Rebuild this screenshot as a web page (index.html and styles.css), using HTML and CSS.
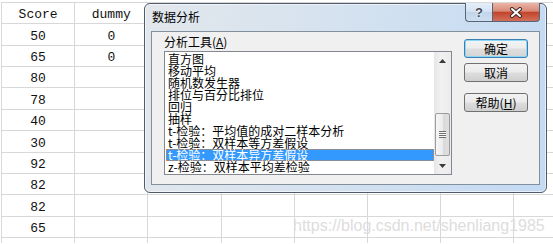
FILE: index.html
```html
<!DOCTYPE html>
<html lang="zh-CN">
<head>
  <meta charset="UTF-8">
  <title>数据分析</title>
  <link rel="stylesheet" href="styles.css">
</head>
<body>
  <table class="sheet">
    <tr><td>Score</td><td>dummy</td><td></td><td></td><td></td><td></td><td></td><td></td></tr>
    <tr><td>50</td><td>0</td><td></td><td></td><td></td><td></td><td></td><td></td></tr>
    <tr><td>65</td><td>0</td><td></td><td></td><td></td><td></td><td></td><td></td></tr>
    <tr><td>80</td><td></td><td></td><td></td><td></td><td></td><td></td><td></td></tr>
    <tr><td>78</td><td></td><td></td><td></td><td></td><td></td><td></td><td></td></tr>
    <tr><td>40</td><td></td><td></td><td></td><td></td><td></td><td></td><td></td></tr>
    <tr><td>30</td><td></td><td></td><td></td><td></td><td></td><td></td><td></td></tr>
    <tr><td>92</td><td></td><td></td><td></td><td></td><td></td><td></td><td></td></tr>
    <tr><td>82</td><td></td><td></td><td></td><td></td><td></td><td></td><td></td></tr>
    <tr><td>82</td><td></td><td></td><td></td><td></td><td></td><td></td><td></td></tr>
    <tr><td>65</td><td></td><td></td><td></td><td></td><td></td><td></td><td></td></tr>
    <tr class="last"><td></td><td></td><td></td><td></td><td></td><td></td><td></td><td></td></tr>
  </table>

  <div class="dialog">
    <div class="titlebar">
      <span class="title">数据分析</span>
      <div class="caption">
        <span class="cap-btn help-btn">?</span>
        <span class="cap-btn close-btn">
          <svg width="14" height="11" viewBox="0 0 14 11">
            <path d="M3 2 L11 9 M11 2 L3 9" stroke="#3b2a28" stroke-width="4" stroke-linecap="round"/>
            <path d="M3 2 L11 9 M11 2 L3 9" stroke="#ffffff" stroke-width="2" stroke-linecap="round"/>
          </svg>
        </span>
      </div>
    </div>

    <div class="client">
      <div class="tools">
        <div class="label">分析工具(<u>A</u>)</div>
        <div class="listbox">
          <ul class="items">
            <li>直方图</li>
            <li>移动平均</li>
            <li>随机数发生器</li>
            <li>排位与百分比排位</li>
            <li>回归</li>
            <li>抽样</li>
            <li>t-检验：平均值的成对二样本分析</li>
            <li>t-检验：双样本等方差假设</li>
            <li class="selected">t-检验：双样本异方差假设</li>
            <li>z-检验：双样本平均差检验</li>
          </ul>
          <div class="scrollbar">
            <div class="arrow">
              <svg width="7" height="4" viewBox="0 0 7 4"><path d="M3.5 0 L7 4 L0 4 Z" fill="#3a3a3a"/></svg>
            </div>
            <div class="track">
              <div class="thumb"><span class="grip"></span></div>
            </div>
            <div class="arrow">
              <svg width="7" height="4" viewBox="0 0 7 4"><path d="M0 0 L7 0 L3.5 4 Z" fill="#3a3a3a"/></svg>
            </div>
          </div>
        </div>
      </div>

      <div class="actions">
        <button class="btn default">确定</button>
        <button class="btn">取消</button>
        <button class="btn help">帮助(<u>H</u>)</button>
      </div>
    </div>
  </div>

  <div class="watermark">https://blog.csdn.net/shenliang1985</div>
</body>
</html>
```

FILE: styles.css
```css
body {
  margin: 0;
  width: 553px;
  height: 244px;
  overflow: hidden;
  position: relative;
  background: #fff;
  font-family: "Noto Sans CJK SC", sans-serif;
}

/* spreadsheet behind the dialog */
.sheet {
  border-collapse: collapse;
  table-layout: fixed;
  width: 552px;
  margin: 2px 0 0 1px;
}

.sheet tr {
  height: 21.36px;
}

.sheet tr.last {
  height: 6px;
}

.sheet tr.last td {
  border-bottom: none;
}

.sheet td {
  width: 72.2px;
  border: 1px solid #d8d8d8;
  padding: 0 0 1px;
  text-align: center;
  vertical-align: bottom;
  font: 13px/15px "Liberation Mono", monospace;
  color: #111;
}

.sheet td:last-child {
  width: 46px;
  border-right: none;
}

/* dialog window */
.dialog {
  position: absolute;
  left: 144px;
  top: 3px;
  width: 403px;
  height: 190px;
  box-sizing: border-box;
  border: 1px solid #4f5b68;
  border-radius: 6px;
  padding: 0 6px 7px;
  display: flex;
  flex-direction: column;
  background: linear-gradient(100deg, #e2e7ec 0%, #d5e2ef 45%, #c3daf3 100%);
  box-shadow: inset 0 0 0 1px rgba(255, 255, 255, 0.6);
}

.titlebar {
  height: 27px;
  display: flex;
  align-items: flex-start;
}

.title {
  margin: 6px 0 0 1px;
  font-size: 12px;
  line-height: 14px;
  color: #000;
}

.caption {
  margin-left: auto;
  margin-top: -1px;
  display: flex;
}

.cap-btn {
  height: 19px;
  box-sizing: border-box;
  border: 1px solid #56667a;
  border-top: none;
  display: flex;
  align-items: center;
  justify-content: center;
}

.help-btn {
  width: 27px;
  border-right: none;
  border-radius: 0 0 0 4px;
  background: linear-gradient(#e6eff9, #d3e2f2 48%, #c0d4ea 52%, #cfdff0);
  font: bold 13px/1 "Liberation Sans", sans-serif;
  color: #3f4a58;
  text-shadow: 0 0 1px #fff, 0 0 2px #fff;
}

.close-btn {
  width: 48px;
  border-radius: 0 0 4px 0;
  background: linear-gradient(#ebb4a7, #d98a77 45%, #c2442c 52%, #d2705a 100%);
}

.client {
  flex: 1;
  display: flex;
  gap: 12px;
  padding: 0 11px 0 12px;
  border: 1px solid #828f9d;
  background: #f0f0f0;
}

.tools {
  width: 288px;
}

.label {
  margin-top: 3px;
  font-size: 12px;
  line-height: 14px;
  height: 14px;
  color: #000;
}

.listbox {
  margin-top: 2px;
  height: 124px;
  box-sizing: border-box;
  border: 1px solid #828790;
  background: #fff;
  display: flex;
}

.items {
  flex: 1;
  margin: 0;
  padding: 1px 0 0 1px;
  list-style: none;
}

.items li {
  height: 12px;
  padding-left: 2px;
  font-size: 12px;
  line-height: 12px;
  white-space: nowrap;
  color: #000;
}

.items li.selected {
  background: #3399ff;
  color: #fff;
  outline: 1px dotted #d9803a;
  outline-offset: -1px;
}

.scrollbar {
  width: 17px;
  display: flex;
  flex-direction: column;
  background: linear-gradient(to right, #e6e6e6, #f1f1f1 40%, #ececec);
}

.arrow {
  height: 17px;
  display: flex;
  align-items: center;
  justify-content: center;
}

.track {
  flex: 1;
}

.thumb {
  margin: 44px 1px 0;
  height: 43px;
  box-sizing: border-box;
  border: 1px solid #9c9c9c;
  border-radius: 2px;
  background: linear-gradient(to right, #f6f6f6, #ececec 50%, #dadada 52%, #dedede);
  display: flex;
  align-items: center;
  justify-content: center;
}

.grip {
  width: 7px;
  height: 7px;
  background: repeating-linear-gradient(#6f6f6f 0 1px, #f8f8f8 1px 2px);
}

.actions {
  display: flex;
  flex-direction: column;
  gap: 5px;
  padding-top: 7px;
}

.btn {
  width: 64px;
  height: 19px;
  box-sizing: border-box;
  padding: 0;
  border: 1px solid #707070;
  border-radius: 3px;
  background: linear-gradient(#f2f2f2 0%, #ebebeb 48%, #dddddd 52%, #cfcfcf 100%);
  font: 12px/16px "Noto Sans CJK SC", sans-serif;
  color: #000;
}

.btn.default {
  border-color: #3c7fb1;
  box-shadow: inset 0 0 0 1px #8ad8f8;
  background: linear-gradient(#f4f4f4 0%, #ececec 48%, #dfdfdf 52%, #d4d4d4 100%);
}

.btn.help {
  margin-top: 6px;
}

.watermark {
  position: absolute;
  left: 293px;
  top: 217px;
  font: 16px/18px "Liberation Sans", sans-serif;
  color: #dddddd;
  white-space: nowrap;
}
```
